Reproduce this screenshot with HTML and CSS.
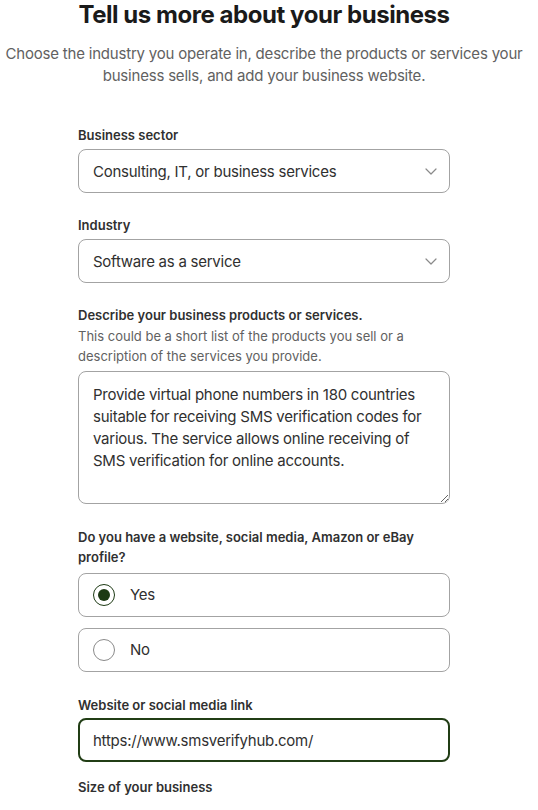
FILE: index.html
```html
<!DOCTYPE html>
<html lang="en">
<head>
  <meta charset="UTF-8" />
  <meta name="viewport" content="width=device-width, initial-scale=1.0"/>
  <title>Tell us more about your business</title>
  <link rel="stylesheet" href="styles.css">
</head>
<body>
  <div class="page">
    <h1>Tell us more about your business</h1>
    <p class="intro">Choose the industry you operate in, describe the products or services your business sells, and add your business website.</p>

    <form class="form" id="businessForm">
      <div class="field">
        <label for="sector">Business sector</label>
        <div class="select-wrap">
          <select id="sector" name="sector">
            <option>Consulting, IT, or business services</option>
          </select>
          <svg class="chevron" width="12" height="7" viewBox="0 0 12 7"><path d="M1 1l5 5 5-5" fill="none" stroke="#8a8a8a" stroke-width="1.2" stroke-linecap="round" stroke-linejoin="round"/></svg>
        </div>
      </div>

      <div class="field">
        <label for="industry">Industry</label>
        <div class="select-wrap">
          <select id="industry" name="industry">
            <option>Software as a service</option>
          </select>
          <svg class="chevron" width="12" height="7" viewBox="0 0 12 7"><path d="M1 1l5 5 5-5" fill="none" stroke="#8a8a8a" stroke-width="1.2" stroke-linecap="round" stroke-linejoin="round"/></svg>
        </div>
      </div>

      <div class="field field-gap">
        <label for="describe">Describe your business products or services.</label>
        <p class="help">This could be a short list of the products you sell or a description of the services you provide.</p>
        <textarea id="describe" name="describe">Provide virtual phone numbers in 180 countries suitable for receiving SMS verification codes for various. The service allows online receiving of SMS verification for online accounts.</textarea>
      </div>

      <div class="field field-gap">
        <span class="label">Do you have a website, social media, Amazon or eBay profile?</span>
        <div class="radios">
          <label class="radio">
            <input type="radio" name="has_site" value="yes" checked>
            <span>Yes</span>
          </label>
          <label class="radio">
            <input type="radio" name="has_site" value="no">
            <span>No</span>
          </label>
        </div>
      </div>

      <div class="field field-link">
        <label for="link">Website or social media link</label>
        <input type="text" id="link" name="link" class="focused" value="https://www.smsverifyhub.com/">
      </div>

      <div class="field">
        <span class="label">Size of your business</span>
      </div>
    </form>
  </div>
</body>
</html>
```

FILE: styles.css
```css
body { margin: 0; font-family: Inter, "Noto Sans", sans-serif; color: #303030; background: #fff; }
.page { width: 528px; }
h1 { margin: 0; font-size: 24px; line-height: 29px; font-weight: 700; color: #1a1a1a; text-align: center; letter-spacing: -0.45px; }
.intro { margin: 14px 0 0; font-size: 15px; line-height: 22px; color: #616161; text-align: center; letter-spacing: -0.2px; }

.form { width: 372px; margin: 38px auto 0; }
.field { margin-bottom: 22px; }
.field-gap { margin-bottom: 23px; }
.field label, .field .label { display: block; font-size: 13px; line-height: 20px; font-weight: 600; color: #303030; margin-bottom: 4px; }
.help { margin: -3px 0 5px; font-size: 13px; line-height: 20px; color: #616161; }

.select-wrap { position: relative; }
select, textarea, input[type=text] { box-sizing: border-box; width: 100%; font-family: inherit; font-size: 15px; letter-spacing: -0.25px; color: #303030; background: #fff; border: 1px solid #a3a3a3; border-radius: 8px; outline: none; }
select { appearance: none; -webkit-appearance: none; height: 44px; padding: 0 40px 0 14px; }
.chevron { position: absolute; right: 13px; top: 19px; pointer-events: none; }

textarea { display: block; height: 133px; padding: 12px 14px; line-height: 22px; resize: vertical; }

.radios { display: flex; flex-direction: column; gap: 11px; margin-top: 6px; }
.field .radio { display: flex; align-items: center; gap: 15px; height: 44px; box-sizing: border-box; padding: 0 14px; border: 1px solid #a3a3a3; border-radius: 8px; margin: 0; font-size: 15px; letter-spacing: -0.25px; font-weight: 400; line-height: 20px; }
.radio input { appearance: none; -webkit-appearance: none; margin: 0; width: 22px; height: 22px; border: 1px solid #8a8a8a; border-radius: 50%; display: grid; place-items: center; flex: none; }
.radio input:checked { border: 1.5px solid #1d3a14; }
.radio input:checked::after { content: ""; width: 12px; height: 12px; border-radius: 50%; background: #1d3a14; }

.field-link { margin-bottom: 15px; }
.field-link label { margin-bottom: 3px; }
input.focused { height: 44px; padding: 0 13px; border: 2px solid #213d15; }
```
